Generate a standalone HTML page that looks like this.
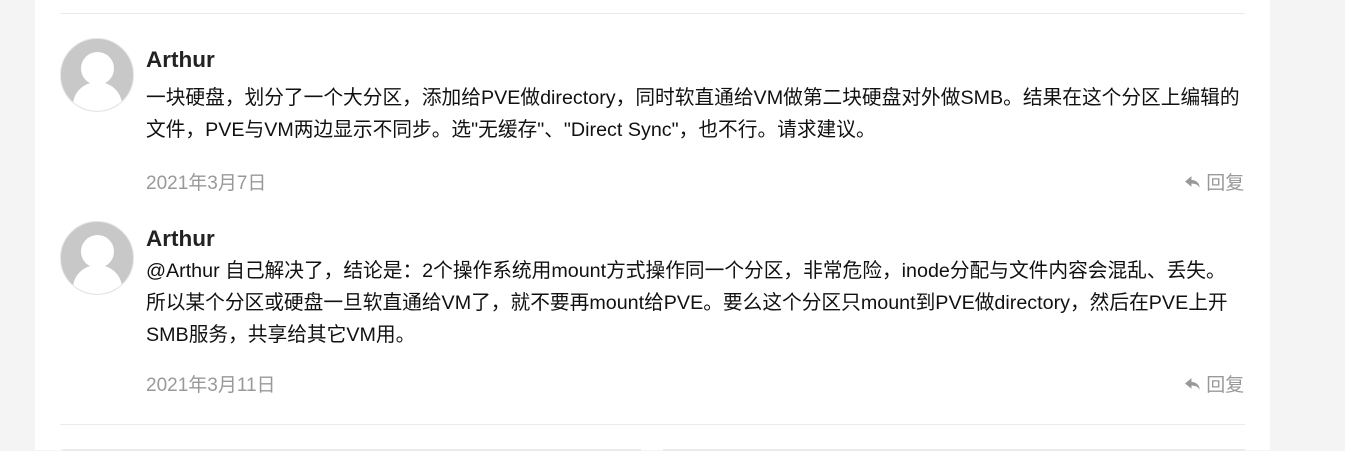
<!DOCTYPE html>
<html><head><meta charset="utf-8"><style>
body{margin:0;background:#f4f4f4;width:1345px;height:450px;overflow:hidden;font-family:"Liberation Sans","Noto Sans CJK SC",sans-serif;}
.card{position:absolute;left:35px;top:0;width:1235px;height:450px;background:#fff;}
.hr{position:absolute;height:1px;background:#ebebeb;}
.av{position:absolute;width:72px;height:72px;border-radius:50%;background:#c8c8c8;border:1px solid #e6e6e6;overflow:hidden;}
.av .h{position:absolute;left:20px;top:13px;width:33px;height:33px;border-radius:50%;background:#fff;}
.av .b{position:absolute;left:12px;top:43px;width:49px;height:46px;border-radius:50%;background:#fff;}
.name{position:absolute;left:146px;font-weight:bold;font-size:22.5px;color:#222;}
.txt{position:absolute;left:146px;width:1120px;font-size:19.72px;line-height:32px;color:#111;white-space:nowrap;}
.date{position:absolute;left:146px;font-size:19px;color:#999;}
.rep{position:absolute;left:1184px;font-size:19px;color:#999;}
.box{position:absolute;top:449px;height:2px;background:#ebebeb;}
</style></head><body>
<div class="card"></div>
<div class="hr" style="left:60px;top:13px;width:1185px"></div>
<div class="av" style="left:60px;top:38px"><div class="h"></div><div class="b"></div></div>
<div class="name" style="top:47px">Arthur</div>
<div class="txt" style="top:82px">一块硬盘，划分了一个大分区，添加给PVE做directory，同时软直通给VM做第二块硬盘对外做SMB。结果在这个分区上编辑的<br>文件，PVE与VM两边显示不同步。选"无缓存"、"Direct Sync"，也不行。请求建议。</div>
<div class="date" style="top:168px">2021年3月7日</div>
<div class="rep" style="top:168px"><svg width="17" height="15" viewBox="0 0 16 14" style="vertical-align:-1px"><path d="M7 1L1 6l6 5V8c4 0 6 1 8 4-1-5-3-7-8-7.5z" fill="#999"/></svg> 回复</div>
<div class="av" style="left:60px;top:221px"><div class="h"></div><div class="b"></div></div>
<div class="name" style="top:226px">Arthur</div>
<div class="txt" style="top:255px">@Arthur 自己解决了，结论是：2个操作系统用mount方式操作同一个分区，非常危险，inode分配与文件内容会混乱、丢失。<br>所以某个分区或硬盘一旦软直通给VM了，就不要再mount给PVE。要么这个分区只mount到PVE做directory，然后在PVE上开<br>SMB服务，共享给其它VM用。</div>
<div class="date" style="top:370px">2021年3月11日</div>
<div class="rep" style="top:370px"><svg width="17" height="15" viewBox="0 0 16 14" style="vertical-align:-1px"><path d="M7 1L1 6l6 5V8c4 0 6 1 8 4-1-5-3-7-8-7.5z" fill="#999"/></svg> 回复</div>
<div class="hr" style="left:60px;top:424px;width:1185px"></div>
<div class="box" style="left:62px;width:579px"></div>
<div class="box" style="left:663px;width:582px"></div>
</body></html>
